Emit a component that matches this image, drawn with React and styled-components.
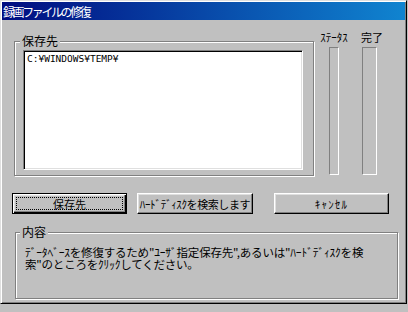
import React from 'react';
import styled, { createGlobalStyle, css } from 'styled-components';

const Global = createGlobalStyle`
  html, body { margin: 0; padding: 0; background: #c0c0c0; }
  body { font-family: "Noto Sans CJK JP", "Noto Sans", sans-serif; color: #000; }
`;

const Window = styled.div`
  box-sizing: border-box;
  width: 407px;
  height: 304px;
  background: #c0c0c0;
  border: 1px solid;
  border-color: #dfdfdf #000 #000 #dfdfdf;
  box-shadow: inset 1px 1px 0 #fff, inset -1px -1px 0 #808080;
  padding: 1px;
  display: flex;
  flex-direction: column;
`;

const TitleBar = styled.div`
  height: 18px;
  flex: none;
  display: flex;
  align-items: center;
  padding-left: 1px;
  background: linear-gradient(to right, #000c80, #1084d0);
  color: #fff;
  font-size: 12px;
  letter-spacing: -2.4px;
  white-space: nowrap;
`;

const Body = styled.div`
  display: flex;
  flex-direction: column;
  align-items: flex-start;
  padding: 11px 0 0 10px;
`;

const TopRow = styled.div`
  display: flex;
  align-items: flex-start;
`;

const GroupBox = styled.fieldset`
  box-sizing: border-box;
  min-width: 0;
  margin: ${p => p.$mt}px 0 0 ${p => p.$ml}px;
  width: ${p => p.$w}px;
  height: ${p => p.$h}px;
  padding: ${p => p.$pad};
  border: 1px solid #808080;
  box-shadow: inset 1px 1px 0 #fff, 1px 1px 0 #fff;
`;

const Legend = styled.legend`
  margin-left: ${p => p.$ml}px;
  padding: 0 2px;
  font-size: 12px;
  line-height: 14px;
  background: #c0c0c0;
`;

const ListBox = styled.div`
  box-sizing: border-box;
  width: 280px;
  height: 120px;
  background: #fff;
  border: 1px solid;
  border-color: #808080 #fff #fff #808080;
  box-shadow: inset 1px 1px 0 #000, inset -1px -1px 0 #dfdfdf;
  padding: 2px 3px;
  font-family: "DejaVu Sans Mono", "Liberation Mono", monospace;
  font-size: 9.5px;
  line-height: 11px;
`;

const Column = styled.div`
  box-sizing: border-box;
  display: flex;
  flex-direction: column;
  align-items: ${p => (p.$center ? 'center' : 'flex-start')};
  width: ${p => p.$w}px;
  margin-left: ${p => p.$ml}px;
`;

const ColLabel = styled.div`
  font-size: 11px;
  line-height: 13px;
  white-space: nowrap;
  padding-left: ${p => p.$pl || 0}px;
`;

const Bar = styled.div`
  box-sizing: border-box;
  width: ${p => p.$w}px;
  height: 128px;
  margin-top: 3px;
  margin-left: ${p => p.$ml || 0}px;
  border: 1px solid;
  border-color: #808080 #fff #fff #808080;
`;

const ButtonRow = styled.div`
  display: flex;
  margin-top: 17px;
`;

const Button = styled.button`
  box-sizing: border-box;
  width: ${p => p.$w}px;
  height: 21px;
  margin: 0 0 0 ${p => p.$ml || 0}px;
  padding: 0;
  background: #c0c0c0;
  font-family: "Noto Sans CJK JP", sans-serif;
  font-size: 11px;
  letter-spacing: ${p => p.$ls || 0}px;
  color: #000;
  white-space: nowrap;
  overflow: hidden;
  border: 1px solid;
  border-color: #fff #000 #000 #fff;
  box-shadow: inset -1px -1px 0 #808080, inset 1px 1px 0 #dfdfdf;
  ${p =>
    p.$default &&
    css`
      border: 1px solid #000;
      box-shadow: inset 1px 1px 0 #fff, inset -1px -1px 0 #000,
        inset -2px -2px 0 #808080, inset 2px 2px 0 #dfdfdf;
      outline: 1px dotted #000;
      outline-offset: -5px;
    `}
`;

const Message = styled.p`
  margin: 0;
  font-size: 11.5px;
  line-height: 12px;
  letter-spacing: -0.2px;
  white-space: nowrap;
`;

export default function App() {
  return (
    <>
      <Global />
      <Window>
        <TitleBar>録画ファイルの修復</TitleBar>
        <Body>
          <TopRow>
            <GroupBox $mt={3} $ml={2} $w={300} $h={142} $pad="2px 10px 0 8px">
              <Legend $ml={-3}>保存先</Legend>
              <ListBox>C:¥WINDOWS¥TEMP¥</ListBox>
            </GroupBox>
            <Column $center $w={32} $ml={4}>
              <ColLabel>ｽﾃｰﾀｽ</ColLabel>
              <Bar $w={10} />
            </Column>
            <Column $w={26} $ml={10}>
              <ColLabel $pl={1}>完了</ColLabel>
              <Bar $w={15} $ml={2} />
            </Column>
          </TopRow>
          <ButtonRow>
            <Button $default $w={115}>保存先</Button>
            <Button $w={116} $ml={10} $ls={-0.4}>ﾊｰﾄﾞﾃﾞｨｽｸを検索します</Button>
            <Button $w={115} $ml={21} $ls={1.2}>ｷｬﾝｾﾙ</Button>
          </ButtonRow>
          <GroupBox $mt={11} $ml={3} $w={383} $h={74} $pad="7px 0 0 9px">
            <Legend $ml={-5}>内容</Legend>
            <Message>
              ﾃﾞｰﾀﾍﾞｰｽを修復するため"ﾕｰｻﾞ指定保存先",あるいは"ﾊｰﾄﾞﾃﾞｨｽｸを検
              <br />
              索"のところをｸﾘｯｸしてください。
            </Message>
          </GroupBox>
        </Body>
      </Window>
    </>
  );
}
